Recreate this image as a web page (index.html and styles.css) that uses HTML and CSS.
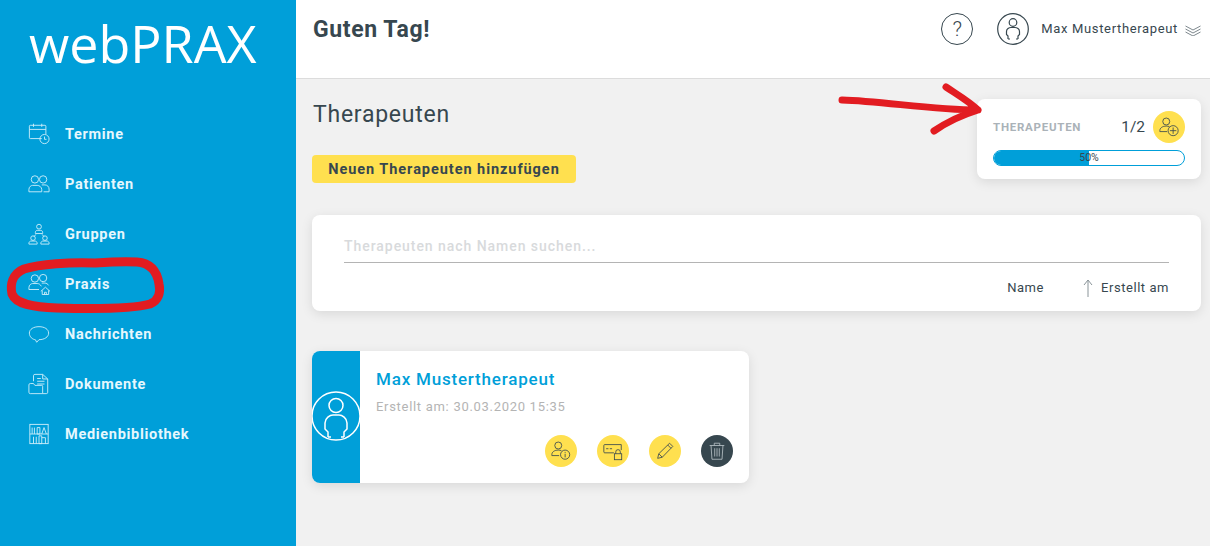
FILE: index.html
```html
<!DOCTYPE html>
<html lang="de">
<head>
    <meta charset="UTF-8">
    <meta name="viewport" content="width=device-width, initial-scale=1.0">
    <title>webPRAX - Therapeuten</title>
    <link rel="stylesheet" href="styles.css">
</head>
<body>
    <div class="app">
        <aside class="sidebar">
            <div class="logo">webPRAX</div>
            <nav class="nav">
                <a class="nav-item" href="#">
                    <svg class="nav-icon" viewBox="0 0 24 24"><path d="M15 17H2.500a1 1 0 0 1-1-1V3.500a1 1 0 0 1 1-1h16a1 1 0 0 1 1 1V12M1.500 7h18M6 .8v3.400M15 .8v3.400"/><circle cx="18" cy="17.500" r="5"/><path d="M18 14.800v3h2.200"/></svg>
                    <span>Termine</span>
                </a>
                <a class="nav-item" href="#">
                    <svg class="nav-icon" viewBox="0 0 24 24"><circle cx="7.500" cy="7" r="4"/><circle cx="16.500" cy="7" r="4"/><path d="M1 20.500v-2.500c0-3 2.500-4.500 4-4.500h5c2.500 0 5 2 5 4.500v2.500zM15 13h3.500c2.500 0 4.500 2 4.500 4.500v3h-6"/></svg>
                    <span>Patienten</span>
                </a>
                <a class="nav-item" href="#">
                    <svg class="nav-icon" viewBox="0 0 24 24"><circle cx="12" cy="4" r="2.600"/><path d="M8 11.500v-1c0-1.500 1-2.500 2-2.500h4c1 0 2 1 2 2.500v1zM8.500 12.500 6.500 15M15.500 12.500l2 2.500"/><circle cx="5.500" cy="16.500" r="2.500"/><path d="M1 23v-1c0-1 1-2.300 2-2.300h5c1 0 2 1.300 2 2.300v1z"/><circle cx="18.500" cy="16.500" r="2.500"/><path d="M14 23v-1c0-1 1-2.300 2-2.300h5c1 0 2 1.300 2 2.300v1z"/></svg>
                    <span>Gruppen</span>
                </a>
                <a class="nav-item" href="#">
                    <svg class="nav-icon" viewBox="0 0 24 24"><circle cx="7.500" cy="6" r="4"/><circle cx="16.500" cy="5.500" r="4"/><path d="M1 18v-2c0-3 2.500-4.500 4-4.500h5c2 0 3.500 1 4.500 3M1 18h11M15 11h3.500c1.500 0 3 .8 4 2.500"/><path d="m14 20 5-4.500 5 4.500M15.500 19v4.500h7V19M18 23.500v-2.500h2v2.500"/></svg>
                    <span>Praxis</span>
                </a>
                <a class="nav-item" href="#">
                    <svg class="nav-icon" viewBox="0 0 24 24"><path d="M12 4C6 4 1.500 6.800 1.500 11S5 18 8 18.200l1.500 2.800 2.500-2.800c6 0 10.500-3 10.500-7.200S18 4 12 4z"/></svg>
                    <span>Nachrichten</span>
                </a>
                <a class="nav-item" href="#">
                    <svg class="nav-icon" viewBox="0 0 24 24"><path d="M6 9V3a1.500 1.500 0 0 1 1.500-1.500H16l5.500 5v14.500a1.500 1.500 0 0 1-1.500 1.500h-4M16 1.500v5h5.500M10 6h4M10 9h8M10 12h8"/><path d="M2.500 22.500a1.500 1.500 0 0 1-1.500-1.500v-8a1.500 1.500 0 0 1 1.500-1.500h3.500l1.500 2H15a1 1 0 0 1 1 1v8z"/></svg>
                    <span>Dokumente</span>
                </a>
                <a class="nav-item" href="#">
                    <svg class="nav-icon" viewBox="0 0 24 24"><rect x="2" y="1.500" width="20" height="21"/><path d="M2 12h20M4.500 5v7M7 5v7M10 5h3v7h-3zM15 12l2.500-7 2.500 7M6 15v7.500M9 15v7.500M12 14h3v8.500h-3zM15 16h4v6.500"/></svg>
                    <span>Medienbibliothek</span>
                </a>
            </nav>
        </aside>

        <div class="main">
            <header class="topbar">
                <h1 class="greeting">Guten Tag!</h1>
                <div class="topbar-right">
                    <div class="help-circle">?</div>
                    <svg class="user-circle" viewBox="0 0 32 32"><circle cx="16" cy="16" r="15.300"/><circle cx="16" cy="9.500" r="3.800"/><path d="M11 26v-3l-1.500-1.500v-3c0-2.500 2.500-4 4.500-4h4c2 0 4.500 1.500 4.500 4v3L21 23v3M11 26h2M19 26h2"/></svg>
                    <span class="user-name">Max Mustertherapeut</span>
                    <svg class="chevrons" viewBox="0 0 16 12"><path d="m.5 2 7.500 4 7.500-4M.5 5l7.500 4 7.500-4M.5 8l7.500 4 7.500-4"/></svg>
                </div>
            </header>

            <section class="content">
                <div class="content-head">
                    <div>
                        <h2 class="page-title">Therapeuten</h2>
                        <button class="add-btn">Neuen Therapeuten hinzufügen</button>
                    </div>
                    <div class="quota card">
                        <div class="quota-row">
                            <span class="quota-label">THERAPEUTEN</span>
                            <span class="quota-count">1/2</span>
                            <span class="round-btn">
                                <svg viewBox="0 0 24 24"><circle cx="9" cy="6" r="3.800"/><path d="M2 17v-1c0-3 3-5 7-5 1.500 0 2.500.2 3.500.7M2 17h8"/><circle cx="16.500" cy="16" r="5.500"/><path d="M16.500 12.500v7M13 16h7"/></svg>
                            </span>
                        </div>
                        <div class="progress">
                            <div class="progress-fill" style="width: 50%"></div>
                            <span class="progress-text">50%</span>
                        </div>
                    </div>
                </div>

                <div class="search card">
                    <div class="search-field">Therapeuten nach Namen suchen...</div>
                    <div class="sort-row">
                        <span>Name</span>
                        <svg class="sort-arrow" viewBox="0 0 10 18"><path d="M5 18V1M1 6l4-5 4 5"/></svg>
                        <span>Erstellt am</span>
                    </div>
                </div>

                <div class="person card">
                    <div class="person-side">
                        <svg viewBox="0 0 50 50"><circle cx="25" cy="25" r="24"/><circle cx="25" cy="14.500" r="7"/><path d="M17 46v-5l-3-3v-6c0-5 5-8 8-8h6c3 0 8 3 8 8v6l-3 3v5M17 46h3M30 46h3"/></svg>
                    </div>
                    <div class="person-body">
                        <div class="person-name">Max Mustertherapeut</div>
                        <div class="person-date">Erstellt am: 30.03.2020 15:35</div>
                        <div class="person-actions">
                            <span class="round-btn">
                                <svg viewBox="0 0 24 24"><circle cx="9" cy="6" r="3.800"/><path d="M2 17v-1c0-3 3-5 7-5 1.500 0 2.500.2 3.500.7M2 17h8"/><circle cx="16.500" cy="16" r="5"/><path d="M16.500 15v4M16.500 13v1"/></svg>
                            </span>
                            <span class="round-btn">
                                <svg viewBox="0 0 24 24"><path d="M13 14H3a1 1 0 0 1-1-1V6a1 1 0 0 1 1-1h18v6"/><path class="dots" d="M4.500 9.500h2.500M8.500 9.500H11"/><rect x="13.500" y="15" width="8" height="6.500"/><path d="M15 15v-2a2.500 2.500 0 0 1 5 0v2"/></svg>
                            </span>
                            <span class="round-btn">
                                <svg viewBox="0 0 24 24"><path d="m4 20 1.200-5L17 3.500l3.500 3.500L9 18.800zM15 5.500 18.500 9M5.200 15 9 18.800"/></svg>
                            </span>
                            <span class="round-btn round-btn-dark">
                                <svg viewBox="0 0 24 24"><path d="M4 6h16M9 6V3.500h6V6M5.500 6l1 15h11l1-15M9.500 9v9M12 9v9M14.500 9v9"/></svg>
                            </span>
                        </div>
                    </div>
                </div>
            </section>
        </div>
    </div>

    <!-- rote Markierungen aus dem Screenshot -->
    <svg class="marks" viewBox="0 0 1210 546">
        <path class="mark-ring" d="M95 263C70 262 40 264 24 269 12 274 10 285 12 294c4 10 20 13 45 14 35 1 75 1 93-4 8-3 11-11 9-20-2-14-10-21-22-22-14-1-28 0-42 1"/>
        <path d="M842 100c40 1 90 10 136 10M946 87c12 8 24 15 32 23-16 5-31 12-44 21"/>
    </svg>
</body>
</html>
```

FILE: styles.css
```css
* {
    box-sizing: border-box;
}

body {
    margin: 0;
    font-family: Roboto, Arial, sans-serif;
    color: #37474f;
    background-color: #f1f1f1;
    overflow: hidden;
}

.app {
    display: flex;
    height: 546px;
}

.sidebar {
    width: 296px;
    flex-shrink: 0;
    background-color: #009fd9;
    color: white;
}

.logo {
    font-family: "Open Sans", sans-serif;
    font-size: 52px;
    font-weight: 500;
    line-height: 60px;
    padding: 13px 0 0 29px;
    height: 109px;
}

.nav {
    display: flex;
    flex-direction: column;
}

.nav-item {
    display: flex;
    align-items: center;
    height: 50px;
    padding-left: 28px;
    color: #e6f7fd;
    font-size: 14.500px;
    font-weight: 700;
    letter-spacing: 0.7px;
    text-decoration: none;
}

.nav-icon {
    width: 22px;
    height: 22px;
    margin-right: 15px;
    fill: none;
    stroke: #cdeefa;
    stroke-width: 1;
}

.main {
    flex: 1;
    display: flex;
    flex-direction: column;
    min-width: 0;
}

.topbar {
    height: 79px;
    flex-shrink: 0;
    background-color: white;
    border-bottom: 1px solid #dcdcdc;
    display: flex;
    justify-content: space-between;
    padding: 13px 9px 0 17px;
}

.greeting {
    margin: 2px 0 0;
    font-size: 23px;
    line-height: 30px;
    font-weight: 700;
    letter-spacing: 0.6px;
}

.topbar-right {
    display: flex;
    align-items: flex-start;
    height: 32px;
}

.help-circle {
    width: 32px;
    height: 32px;
    border: 1.300px solid #37474f;
    border-radius: 50%;
    text-align: center;
    font-size: 21px;
    font-weight: 300;
    line-height: 30px;
    margin-right: 24px;
}

.user-circle {
    width: 32px;
    height: 32px;
    margin-right: 12px;
    fill: none;
    stroke: #37474f;
    stroke-width: 1.200;
}

.user-name {
    font-size: 13px;
    font-weight: 400;
    letter-spacing: 0.65px;
    line-height: 32px;
    margin-right: 7px;
}

.chevrons {
    width: 16px;
    height: 12px;
    margin-top: 11px;
    fill: none;
    stroke: #7d888d;
    stroke-width: 1;
}

.content {
    flex: 1;
    padding: 19px 9px 0 16px;
}

.card {
    background-color: white;
    border-radius: 8px;
    box-shadow: 0 3px 12px rgba(0, 0, 0, 0.1);
}

.content-head {
    display: flex;
    justify-content: space-between;
    align-items: flex-start;
    height: 117px;
}

.page-title {
    margin: 2px 0 25px 1px;
    font-size: 23px;
    line-height: 30px;
    font-weight: 400;
    letter-spacing: 0.75px;
}

.add-btn {
    display: block;
    width: 264px;
    height: 28px;
    padding: 0;
    border: none;
    border-radius: 4px;
    background-color: #ffe04f;
    color: #37474f;
    font-family: inherit;
    font-size: 14.500px;
    font-weight: 700;
    letter-spacing: 0.95px;
}

.quota {
    width: 224px;
    height: 80px;
    margin-top: 1px;
    padding: 12px 16px 0;
}

.quota-row {
    display: flex;
    align-items: center;
    height: 32px;
}

.quota-label {
    flex: 1;
    font-size: 11.500px;
    font-weight: 700;
    letter-spacing: 0.75px;
    color: #aab2b8;
}

.quota-count {
    font-size: 15.500px;
    line-height: 34px;
    margin-right: 8px;
}

.round-btn {
    width: 32px;
    height: 32px;
    border-radius: 50%;
    background-color: #ffe04f;
    display: flex;
    align-items: center;
    justify-content: center;
    flex-shrink: 0;
}

.round-btn svg {
    width: 22px;
    height: 22px;
    fill: none;
    stroke: #37474f;
    stroke-width: 0.9;
}

.round-btn-dark {
    background-color: #37474f;
}

.round-btn-dark svg {
    stroke: #b9c2c7;
}

.progress {
    position: relative;
    height: 16px;
    margin-top: 7px;
    border: 1px solid #009fd9;
    border-radius: 8px;
    overflow: hidden;
}

.progress-fill {
    height: 100%;
    background-color: #009fd9;
}

.progress-text {
    position: absolute;
    top: 0;
    left: 0;
    right: 0;
    text-align: center;
    font-size: 10.500px;
    line-height: 14px;
}

.search {
    height: 96px;
    padding: 19px 32px 0;
}

.search-field {
    height: 29px;
    border-bottom: 1px solid #b4b4b4;
    font-size: 14px;
    line-height: 24px;
    font-weight: 500;
    letter-spacing: 0.95px;
    color: #d8dadc;
}

.sort-row {
    display: flex;
    justify-content: flex-end;
    align-items: center;
    height: 49px;
    font-size: 13px;
    letter-spacing: 0.55px;
}

.sort-arrow {
    width: 10px;
    height: 18px;
    margin: 1px 8px 0 39px;
    fill: none;
    stroke: #8a9499;
    stroke-width: 1;
}

.person {
    display: flex;
    width: 437px;
    height: 132px;
    margin-top: 40px;
    overflow: hidden;
}

.person-side {
    width: 48px;
    background-color: #009fd9;
    display: flex;
    align-items: center;
}

.person-side svg {
    width: 50px;
    height: 50px;
    flex-shrink: 0;
    margin: -2px 0 0 -1px;
    fill: none;
    stroke: white;
    stroke-width: 1.500;
}

.person-body {
    flex: 1;
    padding: 16px 16px 0;
}

.person-name {
    font-size: 17px;
    line-height: 24px;
    font-weight: 500;
    letter-spacing: 0.8px;
    color: #009fd9;
}

.person-date {
    margin-top: 7px;
    font-size: 13px;
    line-height: 18px;
    font-weight: 400;
    letter-spacing: 0.7px;
    color: #b4b4b4;
}

.person-actions {
    display: flex;
    justify-content: flex-end;
    gap: 20px;
    margin-top: 19px;
}

.marks {
    position: absolute;
    top: 0;
    left: 0;
    width: 1210px;
    height: 546px;
    fill: none;
    stroke: #e21c21;
    stroke-width: 7;
    stroke-linecap: round;
    stroke-linejoin: round;
    pointer-events: none;
}

.mark-ring {
    stroke-width: 9;
}
```
